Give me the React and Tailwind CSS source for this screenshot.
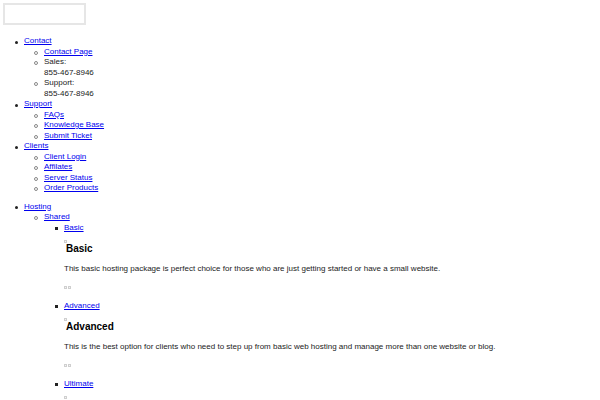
import React from "react";

const A = ({ children }) => (
  <a href="#" className="text-[#0000ee] underline">{children}</a>
);

const Sq = () => <span className="inline-block w-[3px] h-[3px] border border-[#cfcfcf] bg-[#f4f4f4]" />;

const Disc = () => <span className="block w-[3px] h-[3px] rounded-full bg-[#222]" />;
const Circle = () => <span className="block w-[4px] h-[4px] rounded-full border border-[#888]" />;
const Square = () => <span className="block w-[3px] h-[3px] bg-[#222]" />;

const Item = ({ marker, w, children }) => {
  const M = marker === "disc" ? Disc : marker === "circle" ? Circle : Square;
  return (
    <li className="flex">
      <span
        className={
          "shrink-0 flex justify-end pr-[6px] " +
          (w === 24 ? "w-[24px] " : "w-[20px] ") +
          (marker === "circle" ? "pt-[4px]" : "pt-[4.5px]")
        }
      >
        <M />
      </span>
      <div className="min-w-0 flex-1">{children}</div>
    </li>
  );
};

const Plan = ({ name, text, last }) => (
  <Item marker="square" w={20}>
    <A>{name}</A>
    <div className="mt-[7px] flex items-start">
      <Sq />
      <h3 className="pt-[3px] text-[10px] leading-[12px] font-bold text-black ml-[-1px]">{name}</h3>
    </div>
    {!last && (
      <>
        <p className="mt-[9px] text-[#222]">{text}</p>
        <div className="mt-[11px] flex gap-[1px] h-[3px] mb-[12px]">
          <Sq />
          <Sq />
        </div>
      </>
    )}
  </Item>
);

export default function App() {
  return (
    <div
      className="h-[400px] bg-white text-[8px] leading-[10.5px] text-[#222] overflow-hidden"
      style={{ fontFamily: '"Liberation Sans", Arial, sans-serif' }}
    >
      <div className="ml-[3px] pt-[3px]">
        <div className="w-[83px] h-[22px] border-2 border-[#e6e6e6]" />
      </div>
      <ul className="mt-[11px]">
        <Item marker="disc" w={24}>
          <A>Contact</A>
          <ul>
            <Item marker="circle"><A>Contact Page</A></Item>
            <Item marker="circle">Sales:<br />855-467-8946</Item>
            <Item marker="circle">Support:<br />855-467-8946</Item>
          </ul>
        </Item>
        <Item marker="disc" w={24}>
          <A>Support</A>
          <ul>
            <Item marker="circle"><A>FAQs</A></Item>
            <Item marker="circle"><A>Knowledge Base</A></Item>
            <Item marker="circle"><A>Submit Ticket</A></Item>
          </ul>
        </Item>
        <Item marker="disc" w={24}>
          <A>Clients</A>
          <ul>
            <Item marker="circle"><A>Client Login</A></Item>
            <Item marker="circle"><A>Affilates</A></Item>
            <Item marker="circle"><A>Server Status</A></Item>
            <Item marker="circle"><A>Order Products</A></Item>
          </ul>
        </Item>
      </ul>
      <ul className="mt-[8px]">
        <Item marker="disc" w={24}>
          <A>Hosting</A>
          <ul>
            <Item marker="circle">
              <A>Shared</A>
              <ul>
                <Plan
                  name="Basic"
                  text="This basic hosting package is perfect choice for those who are just getting started or have a small website."
                />
                <Plan
                  name="Advanced"
                  text="This is the best option for clients who need to step up from basic web hosting and manage more than one website or blog."
                />
                <Plan name="Ultimate" text="" last />
              </ul>
            </Item>
          </ul>
        </Item>
      </ul>
    </div>
  );
}
